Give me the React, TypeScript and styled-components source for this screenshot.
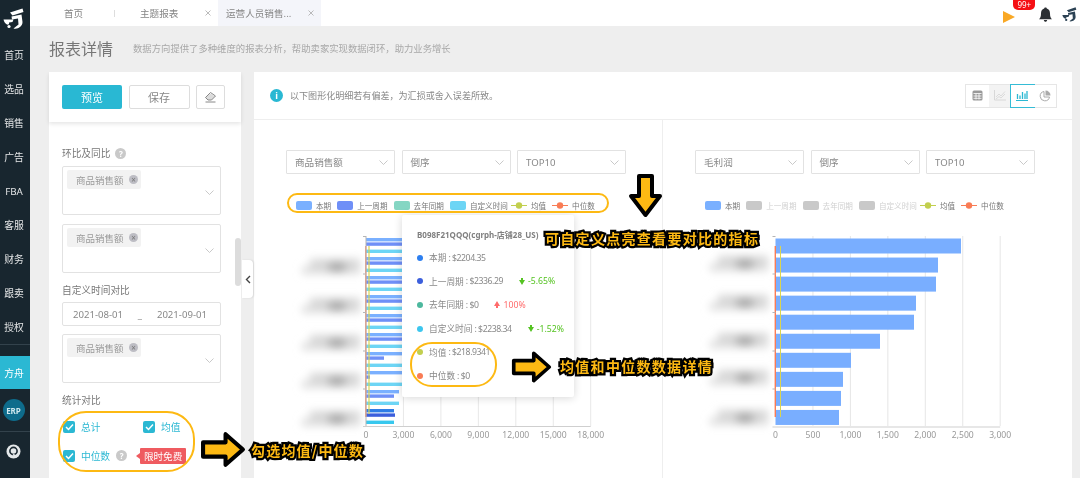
import React from "react";
import styled, { createGlobalStyle } from "styled-components";

const Global = createGlobalStyle`
  html, body { margin: 0; padding: 0; height: 478px; overflow: hidden; background: #eeeeee; }
  body { font-family: "Noto Sans", "Noto Sans CJK SC", sans-serif; }
  #root { height: 478px; }
  * { box-sizing: border-box; }
`;

const Page = styled.div`
  position: relative;
  display: flex;
  width: 1080px;
  height: 478px;
  overflow: hidden;
  background: #eeeeee;
  filter: blur(0.4px);
`;

/* ---------- sidebar ---------- */
const Sidebar = styled.nav`
  width: 30px;
  flex: none;
  display: flex;
  flex-direction: column;
  background: #18262f;
  overflow: hidden;
`;
const LogoSlot = styled.div`
  height: 38px;
  flex: none;
  display: flex;
  justify-content: center;
  padding: 8px 3px 0 0;
`;
const NavItem = styled.div<{ $active?: boolean }>`
  height: ${(p) => (p.$active ? 33 : 34)}px;
  flex: none;
  display: flex;
  align-items: center;
  justify-content: center;
  padding-right: 2px;
  font-size: 9.8px;
  color: #fff;
  opacity: ${(p) => (p.$active ? 1 : 0.88)};
  background: ${(p) => (p.$active ? "#2bb8d3" : "transparent")};
`;
const NavGroup = styled.div`
  display: flex;
  flex-direction: column;
  border-bottom: 1px solid #33424c;
`;
const ArkGroup = styled.div`
  display: flex;
  flex-direction: column;
  padding-top: 11px;
  border-bottom: 1px solid #33424c;
`;
const ErpSlot = styled.div`
  height: 42px;
  display: flex;
  align-items: center;
  justify-content: center;
  padding-right: 3px;
`;
const ErpBadge = styled.div`
  width: 22px;
  height: 22px;
  border-radius: 50%;
  background: #0e6c8c;
  color: #cfe8ef;
  font-size: 8px;
  font-weight: 700;
  display: flex;
  align-items: center;
  justify-content: center;
`;
const IconSlot = styled.div`
  height: 38px;
  flex: none;
  display: flex;
  align-items: center;
  justify-content: center;
  padding-right: 3px;
`;

/* ---------- main ---------- */
const Main = styled.div`
  flex: 1;
  min-width: 0;
  display: flex;
  flex-direction: column;
`;
const TopBar = styled.header`
  height: 26px;
  flex: none;
  display: flex;
  align-items: stretch;
  background: #fff;
  padding-right: 3px;
`;
const Tab = styled.div<{ $w: number; $pl: number; $active?: boolean; $sep?: boolean }>`
  position: relative;
  width: ${(p) => p.$w}px;
  padding: 0 7px 0 ${(p) => p.$pl}px;
  display: flex;
  align-items: center;
  justify-content: space-between;
  font-size: 9.6px;
  color: #858585;
  background: ${(p) => (p.$active ? "#f4f5fa" : "transparent")};
  &::before {
    content: "";
    display: ${(p) => (p.$sep ? "block" : "none")};
    position: absolute;
    left: 0;
    top: 10px;
    height: 7px;
    width: 1px;
    background: #ddd;
  }
`;
const TopActions = styled.div`
  margin-left: auto;
  display: flex;
  align-items: flex-start;
`;
const PlayWrap = styled.div`
  position: relative;
  width: 12px;
  height: 12px;
  margin-top: 6px;
`;
const CountBadge = styled.span`
  position: absolute;
  left: 10px;
  top: -6px;
  width: 22px;
  height: 10px;
  border-radius: 0 0 5px 5px;
  background: #f50f14;
  color: #fff;
  font-size: 8px;
  line-height: 10px;
  text-align: center;
`;
const BellWrap = styled.div`
  margin: 5px 0 0 24px;
`;
const CornerLogo = styled.div`
  margin: 5px 0 0 10px;
`;

const TitleRow = styled.div`
  height: 46px;
  flex: none;
  display: flex;
  align-items: center;
  padding: 0 0 2px 19px;
`;
const Title = styled.h1`
  margin: 0;
  font-size: 16px;
  font-weight: 400;
  color: #777;
`;
const Subtitle = styled.span`
  margin-left: 20px;
  font-size: 9.35px;
  color: #a8a8a8;
`;
const Content = styled.div`
  position: relative;
  flex: 1;
  min-height: 0;
  display: flex;
  gap: 13px;
  padding-left: 19px;
  overflow: hidden;
`;

/* ---------- filter card ---------- */
const FilterCard = styled.aside`
  position: relative;
  width: 192px;
  flex: none;
  display: flex;
  flex-direction: column;
  background: #fff;
`;
const ButtonBar = styled.div`
  height: 50px;
  flex: none;
  display: flex;
  align-items: center;
  padding-left: 13px;
  box-shadow: 0 2px 4px rgba(0, 0, 0, 0.1);
`;
const PrimaryButton = styled.div`
  width: 60px;
  height: 24px;
  border-radius: 2px;
  background: #29b8d3;
  color: #fff;
  font-size: 11px;
  display: flex;
  align-items: center;
  justify-content: center;
`;
const GhostButton = styled.div<{ $w: number }>`
  width: ${(p) => p.$w}px;
  height: 24px;
  margin-left: 6.5px;
  border: 1px solid #ddd;
  border-radius: 2px;
  color: #888;
  font-size: 11px;
  display: flex;
  align-items: center;
  justify-content: center;
`;
const FilterBody = styled.div`
  display: flex;
  flex-direction: column;
  padding: 24px 20px 0 13px;
`;
const FieldLabel = styled.div<{ $mt?: number }>`
  margin-top: ${(p) => p.$mt ?? 0}px;
  height: 14px;
  display: flex;
  align-items: center;
  font-size: 9.7px;
  color: #777;
  gap: 5px;
`;
const HelpDot = styled.span`
  width: 11px;
  height: 11px;
  border-radius: 50%;
  background: #c9c9c9;
  color: #fff;
  font-size: 8px;
  font-weight: 700;
  display: inline-flex;
  align-items: center;
  justify-content: center;
`;
const MultiSelect = styled.div<{ $mt: number }>`
  position: relative;
  width: 159px;
  height: 49px;
  margin-top: ${(p) => p.$mt}px;
  padding: 3px 4px;
  border: 1px solid #e2e2e2;
  border-radius: 2px;
  svg.chev {
    position: absolute;
    right: 6px;
    top: 23px;
  }
`;
const Tag = styled.span`
  width: 74px;
  height: 19px;
  padding: 0 3px 0 9px;
  border-radius: 2px;
  background: #f2f2f2;
  color: #9a9a9a;
  font-size: 9.5px;
  display: flex;
  align-items: center;
  justify-content: space-between;
`;
const TagClose = styled.span`
  width: 9px;
  height: 9px;
  border-radius: 50%;
  background: #bdbdc4;
  color: #777;
  font-size: 8px;
  line-height: 9px;
  text-align: center;
`;
const DateBox = styled.div`
  width: 159px;
  height: 24px;
  margin-top: 5px;
  border: 1px solid #e2e2e2;
  border-radius: 2px;
  padding: 0 13px 0 10px;
  display: flex;
  align-items: center;
  justify-content: space-between;
  font-size: 9.6px;
  color: #888;
`;
const ChecksRow = styled.div<{ $mt?: number }>`
  margin-top: ${(p) => p.$mt ?? 0}px;
  height: 29px;
  display: flex;
  align-items: center;
  padding-left: 1px;
`;
const CheckItem = styled.div<{ $w?: number }>`
  width: ${(p) => (p.$w ? `${p.$w}px` : "auto")};
  display: flex;
  align-items: center;
  gap: 6px;
  font-size: 9.7px;
  color: #2bb8d3;
`;
const CheckBox = styled.span`
  width: 12px;
  height: 12px;
  border-radius: 2px;
  background: #2bb8d3;
  display: inline-flex;
  align-items: center;
  justify-content: center;
`;
const FreeBadge = styled.span`
  position: relative;
  margin-left: 13px;
  width: 46px;
  height: 16px;
  border-radius: 1px;
  background: #ef5b60;
  color: #fff;
  font-size: 9.6px;
  display: flex;
  align-items: center;
  justify-content: center;
  &::before {
    content: "";
    position: absolute;
    left: -4px;
    top: 5px;
    border-style: solid;
    border-width: 3px 4px 3px 0;
    border-color: transparent #ef5b60 transparent transparent;
  }
`;
const ScrollThumb = styled.div`
  position: absolute;
  right: 0;
  top: 166px;
  width: 6px;
  height: 48px;
  border-radius: 3px;
  background: #dcdcdc;
`;
const CollapseHandle = styled.div`
  position: absolute;
  left: 212px;
  top: 188px;
  width: 11px;
  height: 38px;
  border-radius: 0 4px 4px 0;
  background: #fff;
  box-shadow: 1px 0 2px rgba(0, 0, 0, 0.1);
  display: flex;
  align-items: center;
  justify-content: center;
`;

/* ---------- chart card ---------- */
const ChartCard = styled.section`
  width: 818px;
  flex: none;
  display: flex;
  flex-direction: column;
  background: #fff;
`;
const ChartHeader = styled.div`
  height: 48px;
  flex: none;
  display: flex;
  align-items: center;
  padding: 0 15px 0 16px;
  border-bottom: 1px solid #eeeeee;
`;
const InfoDot = styled.span`
  width: 13px;
  height: 13px;
  border-radius: 50%;
  background: #29b8d3;
  color: #fff;
  font-size: 9px;
  font-weight: 700;
  display: flex;
  align-items: center;
  justify-content: center;
`;
const Notice = styled.span`
  margin-left: 7px;
  font-size: 9.05px;
  color: #888;
`;
const ViewSwitch = styled.div`
  margin-left: auto;
  display: flex;
  border: 1px solid #e6e6e6;
  height: 24px;
`;
const ViewButton = styled.div<{ $active?: boolean; $muted?: boolean }>`
  width: 22.5px;
  display: flex;
  align-items: center;
  justify-content: center;
  background: ${(p) => (p.$muted ? "#f3f3f3" : "#fff")};
  outline: ${(p) => (p.$active ? "1px solid #35bcd6" : "none")};
  outline-offset: 0;
`;
const PanelGrid = styled.div`
  flex: 1;
  display: grid;
  grid-template-columns: 409px 409px;
`;
const Panel = styled.div<{ $divider?: boolean }>`
  position: relative;
  padding: 30px 0 0 32px;
  border-right: ${(p) => (p.$divider ? "1px solid #eeeeee" : "none")};
`;
const SelectRow = styled.div`
  display: flex;
  gap: 6.5px;
`;
const SelectBox = styled.div`
  width: 109px;
  height: 24px;
  padding: 0 6px 0 8px;
  border: 1px solid #e2e2e2;
  border-radius: 1px;
  display: flex;
  align-items: center;
  justify-content: space-between;
  font-size: 9.6px;
  color: #888;
`;
const Legend = styled.div`
  margin-top: 26px;
  height: 10px;
  padding-left: 10px;
  display: flex;
  align-items: center;
  gap: 6px;
`;
const LegendItem = styled.div<{ $off?: boolean; $pull?: boolean }>`
  display: flex;
  align-items: center;
  gap: 4px;
  margin-left: ${(p) => (p.$pull ? -3 : 0)}px;
  font-size: 7.6px;
  color: ${(p) => (p.$off ? "#d0d0d0" : "#777")};
  white-space: nowrap;
`;
const Swatch = styled.span<{ $c: string }>`
  width: 16px;
  height: 9px;
  border-radius: 2px;
  background: ${(p) => p.$c};
`;
const ChartSvg = styled.svg`
  display: block;
  margin-top: 15px;
`;
const AxisText = styled.text`
  font-size: 8.6px;
  fill: #999;
  text-anchor: middle;
`;

const Tooltip = styled.div`
  position: absolute;
  left: 148px;
  top: 95px;
  width: 172px;
  height: 182px;
  padding: 13px 0 0 15px;
  background: #fff;
  border-radius: 2px;
  box-shadow: 0 1px 8px rgba(0, 0, 0, 0.16);
`;
const TipTitle = styled.div`
  height: 14px;
  line-height: 14px;
  font-size: 8px;
  font-weight: 700;
  color: #808080;
  white-space: nowrap;
  margin-bottom: 4px;
`;
const TipRow = styled.div`
  height: 23.6px;
  display: flex;
  align-items: center;
  font-size: 8.7px;
  color: #888;
  white-space: pre;
`;
const TipValue = styled.span`
  margin-left: 2px;
  letter-spacing: -0.45px;
`;
const TipDot = styled.span<{ $c: string }>`
  width: 6px;
  height: 6px;
  border-radius: 50%;
  margin-right: 6px;
  background: ${(p) => p.$c};
`;
const Delta = styled.span<{ $up?: boolean }>`
  margin-left: 16px;
  display: flex;
  align-items: center;
  gap: 3px;
  font-size: 8.7px;
  color: ${(p) => (p.$up ? "#ff6b6b" : "#55c322")};
`;

/* ---------- annotations ---------- */
const Ring = styled.div<{ $x: number; $y: number; $w: number; $h: number; $r: number }>`
  position: absolute;
  left: ${(p) => p.$x}px;
  top: ${(p) => p.$y}px;
  width: ${(p) => p.$w}px;
  height: ${(p) => p.$h}px;
  border: 2px solid #fdb913;
  border-radius: ${(p) => p.$r}px;
  pointer-events: none;
`;
const Callout = styled.div<{ $x: number; $y: number; $sp: number }>`
  position: absolute;
  left: ${(p) => p.$x}px;
  top: ${(p) => p.$y}px;
  font-family: "Noto Sans CJK SC", sans-serif;
  font-size: 14px;
  line-height: 18px;
  font-weight: 700;
  letter-spacing: ${(p) => p.$sp}px;
  color: #fdb913;
  white-space: nowrap;
  -webkit-text-stroke: 4.5px #000;
  paint-order: stroke fill;
`;
const ArrowSlot = styled.svg<{ $x: number; $y: number }>`
  position: absolute;
  left: ${(p) => p.$x}px;
  top: ${(p) => p.$y}px;
`;

/* ---------- drawings ---------- */
const Logo = ({ c, s = 1 }: { c: string; s?: number }) => (
  <svg width={21 * s} height={21 * s} viewBox="0 0 21 21">
    <path d="M7 4.5 L19.5 0.5 L20.5 4 L9.5 7.5 Z" fill={c} />
    <path d="M8.5 8.5 L18.5 6.5 L19.5 14 C19.5 18.5 15 21.5 10.5 20.5 L15.5 16.5 L15 10.5 L9 11.5 Z" fill={c} />
    <path d="M0.5 11.5 L10.5 11.5 L9.5 14 L6 14.5 C6.5 16 5.5 17 4 16.5 C2.5 16 1 14 0.5 11.5 Z" fill={c} />
    <circle cx="6" cy="18.5" r="1.6" fill={c} />
  </svg>
);
const Chevron = ({ className }: { className?: string }) => (
  <svg className={className} width="9" height="5" viewBox="0 0 9 5" fill="none">
    <path d="M0.5 0.5 L4.5 4.5 L8.5 0.5" stroke="#bbb" strokeWidth="0.8" />
  </svg>
);
const CloseX = () => (
  <svg width="6" height="6" viewBox="0 0 6 6">
    <path d="M0.5 0.5 L5.5 5.5 M5.5 0.5 L0.5 5.5" stroke="#aaa" strokeWidth="0.8" />
  </svg>
);
const Tick = () => (
  <svg width="9" height="8" viewBox="0 0 9 8" fill="none">
    <path d="M1 4 L3.5 6.5 L8 1.5" stroke="#fff" strokeWidth="1.5" />
  </svg>
);
const DownMark = () => (
  <svg width="6" height="7" viewBox="0 0 6 7">
    <path d="M2 0 H4 V2 H6 L3 7 L0 2 H2 Z" fill="#55c322" />
  </svg>
);
const UpMark = () => (
  <svg width="6" height="7" viewBox="0 0 6 7">
    <path d="M2 7 H4 V5 H6 L3 0 L0 5 H2 Z" fill="#ff6b6b" />
  </svg>
);
const LegendLine = ({ c }: { c: string }) => (
  <svg width="16" height="9" viewBox="0 0 16 9">
    <line x1="0" y1="4.5" x2="16" y2="4.5" stroke={c} strokeWidth="1" />
    <circle cx="8" cy="4.5" r="3.2" fill={c} />
  </svg>
);

const names = ["本期", "上一周期", "去年同期", "自定义时间"];
const colours = ["#7ab0ff", "#6f8ff7", "#85d6c3", "#6dd5f5"];

const ChartLegend = ({ onlyFirst }: { onlyFirst?: boolean }) => (
  <Legend>
    {names.map((n, i) => (
      <LegendItem key={n} $off={onlyFirst && i > 0}>
        <Swatch $c={onlyFirst && i > 0 ? "#c9c9c9" : colours[i]} />
        {n}
      </LegendItem>
    ))}
    <LegendItem $pull>
      <LegendLine c="#c2cf4e" />
      均值
    </LegendItem>
    <LegendItem>
      <LegendLine c="#f97c55" />
      中位数
    </LegendItem>
  </Legend>
);

const Selects = ({ first }: { first: string }) => (
  <SelectRow>
    {[first, "倒序", "TOP10"].map((t) => (
      <SelectBox key={t}>
        {t}
        <Chevron />
      </SelectBox>
    ))}
  </SelectRow>
);

const BlurBlobs = ({ id, x, ys }: { id: string; x: number; ys: number[] }) => (
  <g>
    <defs>
      <filter id={id} x="-30%" y="-100%" width="160%" height="300%">
        <feGaussianBlur stdDeviation="4.5" />
      </filter>
    </defs>
    <g filter={`url(#${id})`}>
      {ys.map((y) => (
        <g key={y}>
          <rect x={x + 6} y={y - 7} width={50} height={8} fill="#d6d6d6" />
          <rect x={x - 2} y={y + 1} width={58} height={7} fill="#dcdcdc" />
          <ellipse cx={x + 33} cy={y + 1} rx={10} ry={5} fill="#a8a8a8" />
        </g>
      ))}
    </g>
  </g>
);

const LeftChart = () => {
  const x0 = 366;
  const step = 37.45;
  const ends: [number, number, number][] = [
    [430, 430, 430], [430, 430, 430], [430, 430, 430], [430, 430, 430], [430, 430, 430], [430, 430, 430],
    [430, 384, 430], [430, 370, 430], [399, 394, 399], [394, 395, 394],
  ];
  return (
    <ChartSvg width="320" height="220" viewBox="286 225 320 220">
      <BlurBlobs id="blurA" x={304} ys={[266, 305, 342, 380, 418]} />
      {[1, 2, 3, 4, 5, 6].map((k) => (
        <line key={k} x1={x0 + k * step} x2={x0 + k * step} y1="236" y2="426" stroke="#e8e8e8" strokeWidth="1" />
      ))}
      {ends.map((e, i) => {
        const y = 238 + i * 19;
        const last = i === 9;
        return (
          <g key={i}>
            <rect x={x0} y={y} width={e[0] - x0} height={3.4} fill={last ? "#2f7de6" : "#7ab0ff"} />
            <rect x={x0} y={y + 4.4} width={e[1] - x0} height={3.4} fill={last ? "#3c5fdc" : "#6f8ff7"} />
            <rect x={x0} y={y + 11.6} width={e[2] - x0} height={3.4} fill={last ? "#38c8ee" : "#6dd5f5"} />
          </g>
        );
      })}
      <line x1={x0 - 0.2} x2={x0 - 0.2} y1="246" y2="417" stroke="#f97c55" strokeWidth="1.2" />
      <line x1={x0 + 3} x2={x0 + 3} y1="246" y2="414" stroke="#d9d450" strokeWidth="1.2" />
      <line x1={x0} x2={x0} y1="236" y2="427" stroke="#b5b5b5" strokeWidth="1" />
      <line x1={x0 - 3} x2={x0 + 6 * step} y1="426.5" y2="426.5" stroke="#cfcfcf" strokeWidth="1" />
      {[236.5, 274, 312.5, 351, 389].map((y) => (
        <line key={y} x1={x0 - 3} x2={x0} y1={y} y2={y} stroke="#b5b5b5" strokeWidth="1" />
      ))}
      {["0", "3,000", "6,000", "9,000", "12,000", "15,000", "18,000"].map((t, k) => (
        <AxisText key={t} x={x0 + k * step} y="438">
          {t}
        </AxisText>
      ))}
    </ChartSvg>
  );
};

const RightChart = () => {
  const x0 = 775.5;
  const step = 37.45;
  const ends = [961, 938, 936, 916, 914, 880, 851, 843, 841, 839];
  return (
    <ChartSvg width="320" height="220" viewBox="695 225 320 220">
      <BlurBlobs id="blurB" x={712} ys={[263, 302, 340, 377, 417]} />
      {[1, 2, 3, 4, 5, 6].map((k) => (
        <line key={k} x1={x0 + k * step} x2={x0 + k * step} y1="236" y2="426" stroke="#e6e6e6" strokeWidth="1" />
      ))}
      {ends.map((e, i) => (
        <rect key={i} x={x0} y={238.5 + i * 19.05} width={e - x0} height={15} fill="#79aeff" />
      ))}
      <line x1={x0 - 0.2} x2={x0 - 0.2} y1="246" y2="417" stroke="#f97c55" strokeWidth="1.4" />
      <line x1={x0 + 5} x2={x0 + 5} y1="246" y2="417" stroke="#d9d450" strokeWidth="1" />
      <line x1={x0 - 3} x2={x0 + 6 * step} y1="427" y2="427" stroke="#cfcfcf" strokeWidth="1" />
      {[236.5, 274, 312.5, 351, 389].map((y) => (
        <line key={y} x1={x0 - 3} x2={x0} y1={y} y2={y} stroke="#b5b5b5" strokeWidth="1" />
      ))}
      {["0", "500", "1,000", "1,500", "2,000", "2,500", "3,000"].map((t, k) => (
        <AxisText key={t} x={x0 + k * step} y="438">
          {t}
        </AxisText>
      ))}
    </ChartSvg>
  );
};

const TagSelect = ({ mt }: { mt: number }) => (
  <MultiSelect $mt={mt}>
    <Tag>
      商品销售额
      <TagClose>×</TagClose>
    </Tag>
    <Chevron className="chev" />
  </MultiSelect>
);

const RightArrow = ({ x, y, w, h }: { x: number; y: number; w: number; h: number }) => (
  <ArrowSlot $x={x} $y={y} width={w} height={h} viewBox="0 0 45 36">
    <path
      d="M3 11 H25 V3 L42 18 L25 33 V25 H3 Z"
      fill="#fdb913"
      stroke="#000"
      strokeWidth="4"
      strokeLinejoin="round"
    />
  </ArrowSlot>
);
const DownArrow = ({ x, y }: { x: number; y: number }) => (
  <ArrowSlot $x={x} $y={y} width="35" height="45" viewBox="0 0 35 45">
    <path
      d="M11 3 H24 V23 H32 L17.5 42 L3 23 H11 Z"
      fill="#fdb913"
      stroke="#000"
      strokeWidth="4"
      strokeLinejoin="round"
    />
  </ArrowSlot>
);

export default function App() {
  return (
    <Page>
      <Global />
      <Sidebar>
        <LogoSlot>
          <Logo c="#ffffff" />
        </LogoSlot>
        <NavGroup>
          {["首页", "选品", "销售", "广告", "FBA", "客服", "财务", "跟卖", "授权"].map((t) => (
            <NavItem key={t}>{t}</NavItem>
          ))}
        </NavGroup>
        <ArkGroup>
          <NavItem $active>方舟</NavItem>
          <ErpSlot>
            <ErpBadge>ERP</ErpBadge>
          </ErpSlot>
        </ArkGroup>
        <IconSlot>
          <svg width="15" height="15" viewBox="0 0 15 15">
            <circle cx="7.5" cy="7.5" r="7" fill="#e4e8ea" />
            <circle cx="7.5" cy="7" r="3.6" fill="none" stroke="#18262f" strokeWidth="1.6" />
            <path d="M7 10.5 L11 13" stroke="#e4e8ea" strokeWidth="2" />
          </svg>
        </IconSlot>
        <IconSlot>
          <svg width="13" height="13" viewBox="0 0 13 13">
            <circle cx="6.5" cy="6.5" r="5" fill="none" stroke="#cfd5d8" strokeWidth="1.6" />
          </svg>
        </IconSlot>
      </Sidebar>

      <Main>
        <TopBar>
          <Tab $w={84} $pl={34}>
            首页
          </Tab>
          <Tab $w={104} $pl={26} $sep>
            主题报表
            <CloseX />
          </Tab>
          <Tab $w={103} $pl={8} $active>
            运营人员销售...
            <CloseX />
          </Tab>
          <TopActions>
            <PlayWrap>
              <svg width="12" height="12" viewBox="0 0 12 12">
                <path d="M0 0 L12 6 L0 12 Z" fill="#f9a825" />
              </svg>
              <CountBadge>99+</CountBadge>
            </PlayWrap>
            <BellWrap>
              <svg width="13" height="15" viewBox="0 0 13 15">
                <path
                  d="M6.5 0.5 C7.4 0.5 7.8 1 7.8 1.6 C10 2.3 11 4 11 6.5 C11 9.5 11.6 11 13 12.2 H0 C1.4 11 2 9.5 2 6.5 C2 4 3 2.3 5.2 1.6 C5.2 1 5.6 0.5 6.5 0.5 Z M4.8 13 H8.2 C8 14.2 7.3 14.8 6.5 14.8 C5.7 14.8 5 14.2 4.8 13 Z"
                  fill="#2b2f33"
                />
              </svg>
            </BellWrap>
            <CornerLogo>
              <Logo c="#2c4254" s={0.7} />
            </CornerLogo>
          </TopActions>
        </TopBar>

        <TitleRow>
          <Title>报表详情</Title>
          <Subtitle>数据方向提供了多种维度的报表分析，帮助卖家实现数据闭环，助力业务增长</Subtitle>
        </TitleRow>

        <Content>
          <FilterCard>
            <ButtonBar>
              <PrimaryButton>预览</PrimaryButton>
              <GhostButton $w={61}>保存</GhostButton>
              <GhostButton $w={29}>
                <svg width="13" height="12" viewBox="0 0 13 12" fill="none">
                  <path d="M1.5 6.5 L6.5 1.5 L11.5 5 L7.5 9 H4 Z" stroke="#888" strokeWidth="1" />
                  <path d="M1 6.5 L4 9 H7.5 L11 5.5 L6.5 2.5 Z" fill="#888" opacity="0.3" />
                  <path d="M1.5 11 H11.5" stroke="#888" strokeWidth="1" />
                </svg>
              </GhostButton>
            </ButtonBar>
            <FilterBody>
              <FieldLabel>
                环比及同比
                <HelpDot>?</HelpDot>
              </FieldLabel>
              <TagSelect mt={6} />
              <TagSelect mt={9} />
              <FieldLabel $mt={10}>自定义时间对比</FieldLabel>
              <DateBox>
                <span>2021-08-01</span>
                <span>_</span>
                <span>2021-09-01</span>
              </DateBox>
              <TagSelect mt={8} />
              <FieldLabel $mt={10}>统计对比</FieldLabel>
              <ChecksRow $mt={5}>
                <CheckItem $w={80}>
                  <CheckBox>
                    <Tick />
                  </CheckBox>
                  总计
                </CheckItem>
                <CheckItem>
                  <CheckBox>
                    <Tick />
                  </CheckBox>
                  均值
                </CheckItem>
              </ChecksRow>
              <ChecksRow>
                <CheckItem>
                  <CheckBox>
                    <Tick />
                  </CheckBox>
                  中位数
                  <HelpDot>?</HelpDot>
                </CheckItem>
                <FreeBadge>限时免费</FreeBadge>
              </ChecksRow>
            </FilterBody>
            <ScrollThumb />
          </FilterCard>

          <CollapseHandle>
            <svg width="6" height="9" viewBox="0 0 6 9" fill="none">
              <path d="M5 1 L1.5 4.5 L5 8" stroke="#444" strokeWidth="1.4" />
            </svg>
          </CollapseHandle>

          <ChartCard>
            <ChartHeader>
              <InfoDot>i</InfoDot>
              <Notice>以下图形化明细若有偏差，为汇损或舍入误差所致。</Notice>
              <ViewSwitch>
                <ViewButton>
                  <svg width="11" height="11" viewBox="0 0 11 11" fill="none">
                    <rect x="0.5" y="0.5" width="10" height="10" rx="1.5" fill="#999" />
                    <path d="M1.5 3.5 H9.5 M1.5 6 H9.5 M1.5 8.3 H9.5 M4 3.5 V9.5 M7 3.5 V9.5" stroke="#fff" strokeWidth="0.8" />
                  </svg>
                </ViewButton>
                <ViewButton $muted>
                  <svg width="12" height="11" viewBox="0 0 12 11" fill="none">
                    <path d="M0.5 0 V10 H12" stroke="#d8d8d8" strokeWidth="1" />
                    <path d="M2 7 L5 4 L7 6 L11 1.5 M2 9 L5 6.5 L7 8 L11 4" stroke="#d8d8d8" strokeWidth="0.9" />
                  </svg>
                </ViewButton>
                <ViewButton $active>
                  <svg width="12" height="11" viewBox="0 0 12 11">
                    <path d="M0 10.5 H12" stroke="#2bb8d3" strokeWidth="1" />
                    <path
                      d="M1.5 4 V9 M4 5.5 V9 M6.5 2 V9 M9 3.5 V9 M11 1 V9"
                      stroke="#2bb8d3"
                      strokeWidth="1.3"
                      fill="none"
                    />
                  </svg>
                </ViewButton>
                <ViewButton>
                  <svg width="12" height="12" viewBox="0 0 12 12" fill="none">
                    <path d="M5 1.5 A4.7 4.7 0 1 0 10.5 7 H5 Z" stroke="#aaa" strokeWidth="1" />
                    <path d="M6.5 0.5 A5 5 0 0 1 11.5 5.5 H6.5 Z" fill="#aaa" />
                  </svg>
                </ViewButton>
              </ViewSwitch>
            </ChartHeader>
            <PanelGrid>
              <Panel $divider>
                <Selects first="商品销售额" />
                <ChartLegend />
                <LeftChart />
                <Tooltip>
                  <TipTitle>B098F21QQQ(cgrph-店铺28_US)</TipTitle>
                  <TipRow>
                    <TipDot $c="#2d7ff0" />
                    本期<TipValue>: $2204.35</TipValue>
                  </TipRow>
                  <TipRow>
                    <TipDot $c="#3c5fdc" />
                    上一周期<TipValue>: $2336.29</TipValue>
                    <Delta>
                      <DownMark />
                      -5.65%
                    </Delta>
                  </TipRow>
                  <TipRow>
                    <TipDot $c="#4db89e" />
                    去年同期<TipValue>: $0</TipValue>
                    <Delta $up>
                      <UpMark />
                      100%
                    </Delta>
                  </TipRow>
                  <TipRow>
                    <TipDot $c="#3cc6ee" />
                    自定义时间<TipValue>: $2238.34</TipValue>
                    <Delta>
                      <DownMark />
                      -1.52%
                    </Delta>
                  </TipRow>
                  <TipRow>
                    <TipDot $c="#c2cf4e" />
                    均值<TipValue>: $218.9341</TipValue>
                  </TipRow>
                  <TipRow>
                    <TipDot $c="#f97c55" />
                    中位数<TipValue>: $0</TipValue>
                  </TipRow>
                </Tooltip>
              </Panel>
              <Panel>
                <Selects first="毛利润" />
                <ChartLegend onlyFirst />
                <RightChart />
              </Panel>
            </PanelGrid>
          </ChartCard>
        </Content>
      </Main>

      <Ring $x={287} $y={193} $w={322} $h={20} $r={10} />
      <Ring $x={410} $y={342} $w={87} $h={45} $r={22} />
      <Ring $x={58} $y={411} $w={137} $h={61} $r={28} />
      <DownArrow x={628} y={173} />
      <RightArrow x={511} y={350} w={41} h={34} />
      <RightArrow x={200} y={431} w={46} h={37} />
      <Callout $x={545} $y={229} $sp={1.3}>
        可自定义点亮查看要对比的指标
      </Callout>
      <Callout $x={560} $y={357} $sp={1.3}>
        均值和中位数数据详情
      </Callout>
      <Callout $x={251} $y={441} $sp={1.2}>
        勾选均值/中位数
      </Callout>
    </Page>
  );
}
